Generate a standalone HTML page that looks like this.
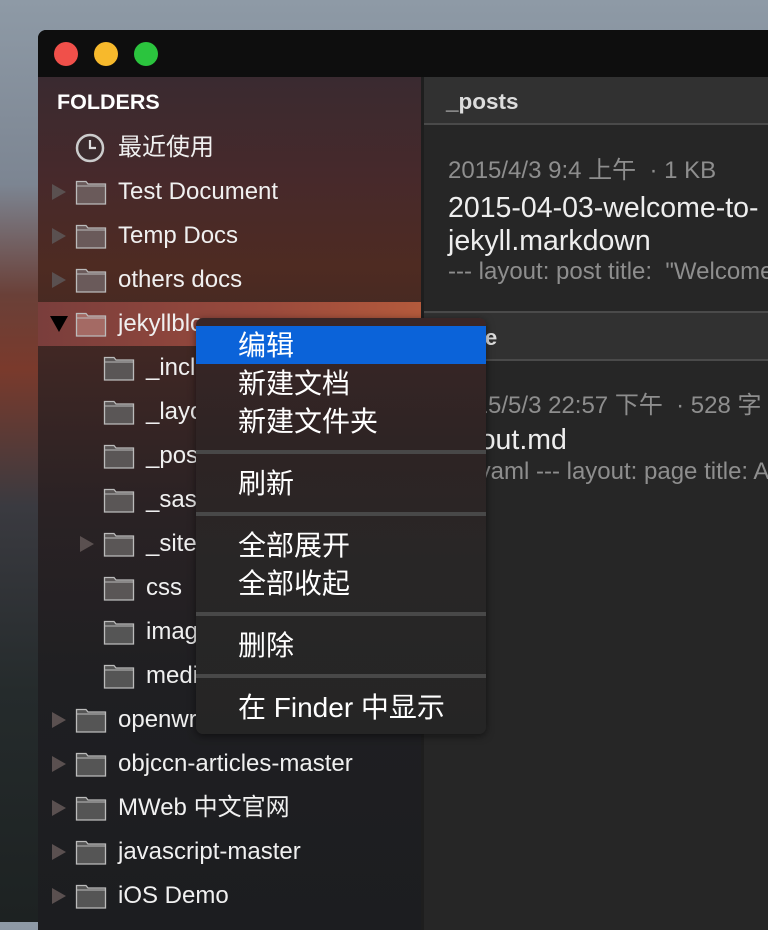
<!DOCTYPE html>
<html><head><meta charset="utf-8"><style>
*{margin:0;padding:0;box-sizing:border-box}
body{width:768px;height:922px;overflow:hidden;position:relative;font-family:"Liberation Sans","Noto Sans CJK SC",sans-serif;
background:linear-gradient(180deg,#8e9aa6 0,#7c8592 20%,#6a4038 32%,#7a3a2c 40%,#3a3a40 55%,#252b2c 75%,#1d2222 100%);}
.win{position:absolute;left:38px;top:30px;width:740px;height:900px;border-radius:8px 0 0 0;overflow:hidden;background:#262626}
.title{position:absolute;left:0;top:0;width:100%;height:47px;background:#0e0e0e}
.dot{position:absolute;top:12px;width:24px;height:24px;border-radius:50%}
.side{position:absolute;left:0;top:47px;width:383px;height:860px;
background:linear-gradient(180deg,#3a2a30 0,#47292b 12%,#4e2b22 22%,#3c2624 35%,#2a2224 50%,#1f1f22 70%,#1c1d20 100%)}
.div{position:absolute;left:383px;top:47px;width:3px;height:860px;background:#1e1e1e}
.fh{position:absolute;left:19px;top:13px;color:#fff;font-weight:bold;font-size:21.5px}
.row{position:absolute;left:0;width:383px;height:44px;color:#f0f0f0;font-size:24px;line-height:28px}
.row .t{position:absolute;top:8px;white-space:nowrap;height:28px}
.row svg{position:absolute}
.sel{background:linear-gradient(90deg,#7a3e3c,#9a4a3c 60%,#b45a3c)}
.rp{position:absolute;left:386px;top:47px;width:360px;height:860px;background:#262626}
.hd{position:absolute;left:0;width:100%;height:48px;background:#313131;border-bottom:2px solid #4a4a4a;color:#ddd;font-weight:bold;font-size:22.5px;line-height:26px;padding:12px 0 0 22px}
.meta{position:absolute;left:24px;color:#8e8e8e;font-size:24px;line-height:28px;white-space:nowrap}
.ttl{position:absolute;left:24px;color:#eee;font-size:28.5px;line-height:33px;white-space:nowrap}
.menu{position:absolute;left:196px;top:318px;width:290px;height:416px;border-radius:7px;overflow:hidden;
background:linear-gradient(180deg,#3a2626 0,#2e2424 30%,#282626 60%,#252525 100%);box-shadow:0 2px 8px rgba(0,0,0,.5)}
.mi{position:absolute;left:42px;color:#fff;font-size:28px;line-height:32px;white-space:nowrap}
.sep{position:absolute;left:0;width:100%;height:4px;background:#484848}
</style></head><body>
<div class="win">
<div class="title">
<div class="dot" style="left:16px;background:#f0504a"></div>
<div class="dot" style="left:56px;background:#f7b92c"></div>
<div class="dot" style="left:96px;background:#2bc43e"></div>
</div>
<div class="side">
<div class="fh">FOLDERS</div>
</div>
<div class="div"></div>
<div class="rp">
<div class="hd" style="top:0">_posts</div>
<div class="meta" style="top:80px">2015/4/3 9:4 上午 &nbsp;· 1 KB</div>
<div class="ttl" style="top:115px">2015-04-03-welcome-to-<br>jekyll.markdown</div>
<div class="meta" style="top:181px">--- layout: post title: &nbsp;"Welcome to Jekyll!"</div>
<div class="hd" style="top:234px;border-top:2px solid #4a4a4a;height:50px">_site</div>
<div class="meta" style="top:315px">2015/5/3 22:57 下午 &nbsp;· 528 字</div>
<div class="ttl" style="top:347px">about.md</div>
<div class="meta" style="top:381px">--- yaml --- layout: page title: About</div>
</div>
</div>
<div id="rows"></div>
<div class="menu">
<div style="position:absolute;left:0;top:8px;width:100%;height:38px;background:#0b63d9"></div>
<div class="mi" style="top:12px">编辑</div>
<div class="mi" style="top:50px">新建文档</div>
<div class="mi" style="top:88px">新建文件夹</div>
<div class="sep" style="top:132px"></div>
<div class="mi" style="top:150px">刷新</div>
<div class="sep" style="top:194px"></div>
<div class="mi" style="top:212px">全部展开</div>
<div class="mi" style="top:250px">全部收起</div>
<div class="sep" style="top:294px"></div>
<div class="mi" style="top:312px">删除</div>
<div class="sep" style="top:356px"></div>
<div class="mi" style="top:374px">在 Finder 中显示</div>
</div>
<script>
var R=[
[126,0,'最近使用',0,'clock'],
[170,0,'Test Document',1],
[214,0,'Temp Docs',1],
[258,0,'others docs',1],
[302,0,'jekyllblog',2],
[346,1,'_includes',0],
[390,1,'_layouts',0],
[434,1,'_posts',0],
[478,1,'_sass',0],
[522,1,'_site',1],
[566,1,'css',0],
[610,1,'images',0],
[654,1,'media',0],
[698,0,'openwrt',1],
[742,0,'objccn-articles-master',1],
[786,0,'MWeb 中文官网',1],
[830,0,'javascript-master',1],
[874,0,'iOS Demo',1]];
var h='';
R.forEach(function(r){
var ind=r[1]?28:0,y=r[0];
h+='<div class="row'+(r[3]==2?' sel':'')+'" style="left:38px;top:'+y+'px">';
if(r[4]){
h+='<svg style="left:37px;top:7px" width="30" height="30" viewBox="0 0 30 30"><circle cx="15" cy="15" r="13" fill="#3a2a2c" stroke="#ccc" stroke-width="2.5"/><path d="M15 7v8h6" stroke="#ddd" stroke-width="2.2" fill="none"/></svg>';
}else{
if(r[3]==1)h+='<svg style="left:'+(14+ind)+'px;top:14px" width="14" height="16"><path d="M0 0L14 8L0 16Z" fill="#5a5050"/></svg>';
if(r[3]==2)h+='<svg style="left:12px;top:14px" width="18" height="16"><path d="M0 0H18L9 16Z" fill="#000"/></svg>';
var fc=r[3]==2?'#a46a64':(y<330?'#6a5a5a':(y<600?'#5a5656':'#555'));
h+='<svg style="left:'+(37+ind)+'px;top:9px" width="32" height="26" viewBox="0 0 32 26"><path d="M1.5 25V2.5H11L13 5H30.5V25Z" fill="'+fc+'" stroke="#bbb" stroke-width="1.3"/><path d="M1.5 7H30.5" stroke="#bbb" stroke-width="1"/></svg>';
}
h+='<div class="t" style="left:'+(80+ind)+'px">'+r[2]+'</div></div>';
});
document.getElementById('rows').innerHTML=h;
</script>
</body></html>
